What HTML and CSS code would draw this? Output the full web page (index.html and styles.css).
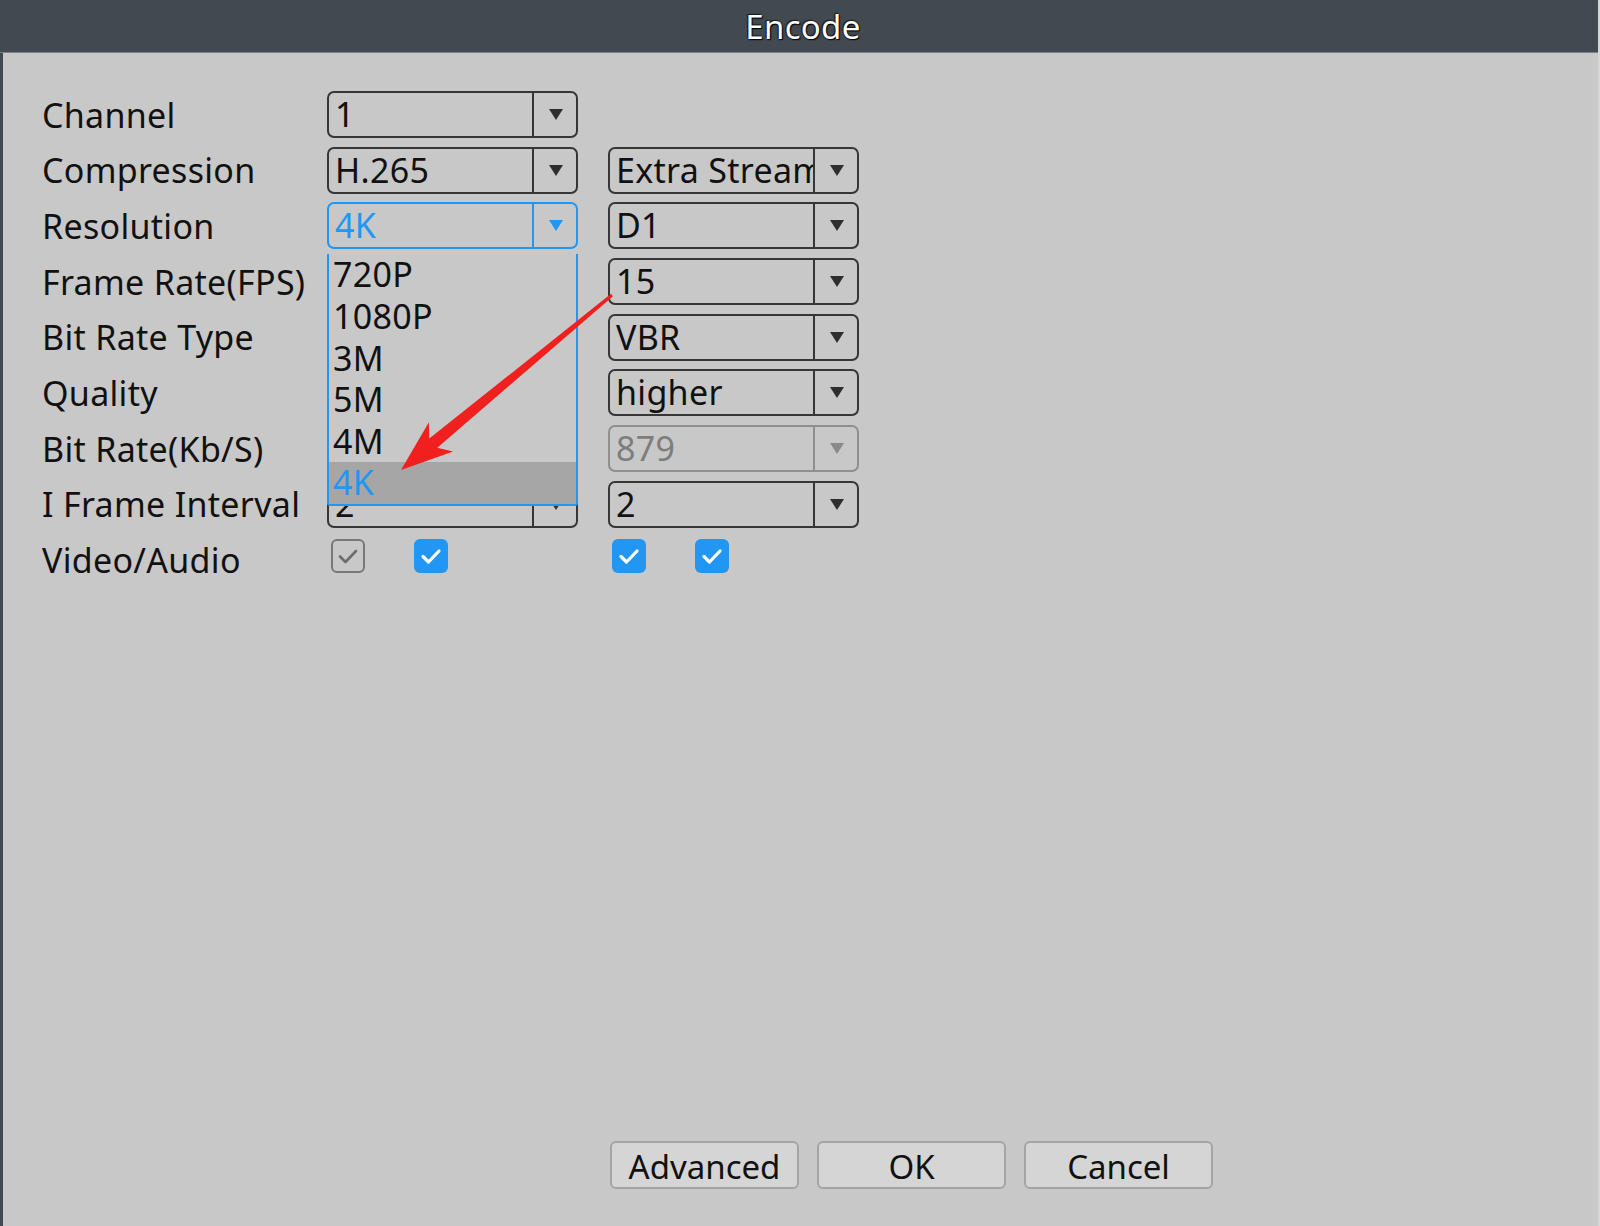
FILE: index.html
```html
<!DOCTYPE html>
<html>
<head>
<meta charset="utf-8">
<link rel="stylesheet" href="styles.css">
</head>
<body>
<div class="window">
  <div class="titlebar"><span class="title">Encode</span></div>
  <div class="content">
    <div class="form">
      <div class="label">Channel</div>
      <div class="select"><span class="val">1</span><span class="arrow"><i class="tri"></i></span></div>
      <div></div>

      <div class="label">Compression</div>
      <div class="select"><span class="val">H.265</span><span class="arrow"><i class="tri"></i></span></div>
      <div class="select"><span class="val clip">Extra Stream</span><span class="arrow"><i class="tri"></i></span></div>

      <div class="label">Resolution</div>
      <div class="cell">
        <div class="select active"><span class="val">4K</span><span class="arrow"><i class="tri"></i></span></div>
        <ul class="list">
          <li>720P</li>
          <li>1080P</li>
          <li>3M</li>
          <li>5M</li>
          <li>4M</li>
          <li class="sel">4K</li>
        </ul>
      </div>
      <div class="select"><span class="val">D1</span><span class="arrow"><i class="tri"></i></span></div>

      <div class="label">Frame Rate(FPS)</div>
      <div class="select"><span class="val"></span><span class="arrow"><i class="tri"></i></span></div>
      <div class="select"><span class="val">15</span><span class="arrow"><i class="tri"></i></span></div>

      <div class="label">Bit Rate Type</div>
      <div class="select"><span class="val"></span><span class="arrow"><i class="tri"></i></span></div>
      <div class="select"><span class="val">VBR</span><span class="arrow"><i class="tri"></i></span></div>

      <div class="label">Quality</div>
      <div class="select"><span class="val"></span><span class="arrow"><i class="tri"></i></span></div>
      <div class="select"><span class="val">higher</span><span class="arrow"><i class="tri"></i></span></div>

      <div class="label">Bit Rate(Kb/S)</div>
      <div class="select disabled"><span class="val"></span><span class="arrow"><i class="tri"></i></span></div>
      <div class="select disabled"><span class="val">879</span><span class="arrow"><i class="tri"></i></span></div>

      <div class="label">I Frame Interval</div>
      <div class="select"><span class="val">2</span><span class="arrow"><i class="tri"></i></span></div>
      <div class="select"><span class="val">2</span><span class="arrow"><i class="tri"></i></span></div>

      <div class="label">Video/Audio</div>
      <div class="checks">
        <span class="cb gray"><svg viewBox="0 0 34 34"><path d="M9 17.5 L14.5 23 L25 12" /></svg></span>
        <span class="cb on"><svg viewBox="0 0 34 34"><path d="M9 17.5 L14.5 23 L25 12" /></svg></span>
      </div>
      <div class="checks">
        <span class="cb on"><svg viewBox="0 0 34 34"><path d="M9 17.5 L14.5 23 L25 12" /></svg></span>
        <span class="cb on"><svg viewBox="0 0 34 34"><path d="M9 17.5 L14.5 23 L25 12" /></svg></span>
      </div>
    </div>

    <div class="footer">
      <button class="btn">Advanced</button>
      <button class="btn">OK</button>
      <button class="btn">Cancel</button>
    </div>
  </div>

  <svg class="annot" viewBox="0 0 1600 1226" width="1600" height="1226">
    <polygon points="613,296.2 437.3,447.8 453.1,451.4 401,470 428.9,422.2 429.3,438.6 611,293.8" fill="#f0201e"/>
  </svg>
</div>
</body>
</html>
```

FILE: styles.css
```css
html, body {
  margin: 0;
  padding: 0;
}

body {
  width: 1600px;
  height: 1226px;
  overflow: hidden;
  background: #c8c8c8;
  font-family: "Noto Sans", "Open Sans", sans-serif;
  color: #111;
}

.window {
  position: relative;
  width: 1600px;
  height: 1226px;
  box-sizing: border-box;
  border-left: 3px solid #414851;
  border-right: 2px solid #d6d6d6;
  display: flex;
  flex-direction: column;
}

.titlebar {
  height: 52px;
  background: #424951;
  border-bottom: 1px solid #7c8186;
  display: flex;
  align-items: center;
  justify-content: center;
  margin-left: -3px;
  padding-left: 8px;
}

.title {
  color: #fff;
  font-size: 33px;
  line-height: 1.2;
  margin-top: 2px;
  letter-spacing: 0.3px;
  text-shadow: 0 0 2px #000, 1px 1px 1px #000, -1px -1px 1px #222;
}

.content {
  flex: 1;
  display: flex;
  flex-direction: column;
  padding: 38px 0 0 39px;
}

.form {
  display: grid;
  grid-template-columns: 255px 251px 251px;
  grid-auto-rows: 47px;
  column-gap: 30px;
  row-gap: 8.7px;
  font-size: 34px;
  letter-spacing: 0.3px;
}

.label {
  display: flex;
  align-items: center;
  white-space: nowrap;
}

.cell {
  position: relative;
}

.select {
  box-sizing: border-box;
  height: 47px;
  border: 2px solid #363636;
  border-radius: 7px;
  display: flex;
}

.val {
  flex: 1;
  min-width: 0;
  padding-left: 6px;
  white-space: nowrap;
  line-height: 43px;
  height: 43px;
}

.val.clip {
  overflow: hidden;
}

.arrow {
  flex: none;
  width: 44px;
  box-sizing: border-box;
  border-left: 2px solid #363636;
  display: flex;
  align-items: center;
  justify-content: center;
}

.tri {
  width: 0;
  height: 0;
  border-left: 7px solid transparent;
  border-right: 7px solid transparent;
  border-top: 11px solid #2e2e2e;
  margin-left: 1px;
}

.select.active {
  border-color: #2196f3;
  color: #2196f3;
}

.select.active .arrow {
  border-left-color: #2196f3;
}

.select.active .tri {
  border-top-color: #2196f3;
}

.select.disabled {
  border-color: #8f8f8f;
  color: #7d7d7d;
}

.select.disabled .arrow {
  border-left-color: #8f8f8f;
}

.select.disabled .tri {
  border-top-color: #8a8a8a;
}

.list {
  position: absolute;
  z-index: 2;
  left: 0;
  top: 52px;
  width: 251px;
  box-sizing: border-box;
  margin: 0;
  padding: 0;
  list-style: none;
  background: #c8c8c8;
  border: 2px solid #2196f3;
  border-top: none;
  border-radius: 0 0 3px 3px;
}

.list li {
  height: 41.6px;
  line-height: 41.6px;
  padding-left: 4px;
  white-space: nowrap;
}

.list li.sel {
  background: #a6a6a6;
  color: #2196f3;
}

.checks {
  display: flex;
  align-items: flex-start;
  gap: 49px;
  padding: 2px 0 0 4px;
}

.cb {
  width: 34px;
  height: 34px;
  box-sizing: border-box;
  border-radius: 6px;
  display: block;
}

.cb svg {
  display: block;
  width: 100%;
  height: 100%;
}

.cb path {
  fill: none;
  stroke-width: 3.2;
  stroke-linecap: round;
  stroke-linejoin: round;
}

.cb.on {
  background: #2196f3;
}

.cb.on svg {
  width: 34px;
  height: 34px;
}

.cb.on path {
  stroke: #fff;
}

.cb.gray {
  border: 2px solid #777;
}

.cb.gray svg {
  margin: -2px;
  width: 34px;
  height: 34px;
}

.cb.gray path {
  stroke: #6c6c6c;
  stroke-width: 2.6;
}

.footer {
  margin-top: auto;
  display: flex;
  gap: 18px;
  padding: 0 0 37px 568px;
}

.btn {
  width: 189px;
  height: 48px;
  box-sizing: border-box;
  background: #d5d5d5;
  border: 2px solid #a4a4a4;
  border-radius: 6px;
  font-family: "Noto Sans", "Open Sans", sans-serif;
  font-size: 33px;
  color: #111;
  padding: 2px 0 0;
  line-height: 1;
}

.annot {
  position: absolute;
  left: -3px;
  top: 0;
  pointer-events: none;
  z-index: 5;
}
```
